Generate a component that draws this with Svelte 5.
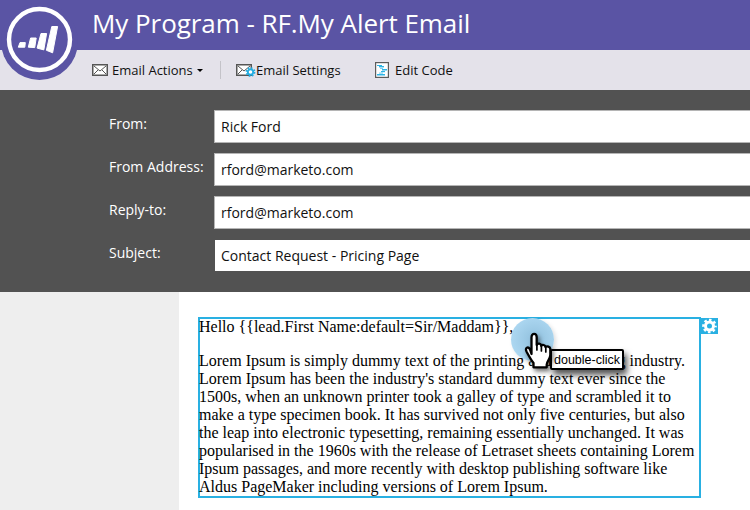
<script>
  const fields = [
    { label: 'From:', value: 'Rick Ford' },
    { label: 'From Address:', value: 'rford@marketo.com' },
    { label: 'Reply-to:', value: 'rford@marketo.com' },
    { label: 'Subject:', value: 'Contact Request - Pricing Page', active: true }
  ];
  const lines = [
    'Lorem Ipsum is simply dummy text of the printing and typesetting industry.',
    "Lorem Ipsum has been the industry's standard dummy text ever since the",
    '1500s, when an unknown printer took a galley of type and scrambled it to',
    'make a type specimen book. It has survived not only five centuries, but also',
    'the leap into electronic typesetting, remaining essentially unchanged. It was',
    'popularised in the 1960s with the release of Letraset sheets containing Lorem',
    'Ipsum passages, and more recently with desktop publishing software like',
    'Aldus PageMaker including versions of Lorem Ipsum.'
  ];
</script>

<div class="app">
  <header>
    <svg class="logo" width="78" height="80" viewBox="0 0 78 80">
      <circle cx="39.5" cy="41.5" r="38.5" fill="#5a54a4" />
      <circle cx="39.5" cy="39.5" r="30.5" fill="none" stroke="#fff" stroke-width="4.4" />
      <g fill="#fff" stroke="#fff" stroke-width="1" stroke-linejoin="round">
        <path d="M20 42.6h5.3l-.5 4.6h-6.5z" />
        <path d="M30.6 38h5.6l-1.5 9.6-6.4-.4z" />
        <path d="M41 33.5h5.6l-2.8 16.4-6.7-1.8z" />
        <path d="M51.8 26.5h5.8l-5 26.3-6.2-2.5z" />
      </g>
    </svg>
    <h1>My Program - RF.My Alert Email</h1>
  </header>

  <nav>
    <div class="item actions">
      <svg width="16" height="12" viewBox="0 0 16 12"><rect x=".75" y=".75" width="14.5" height="10.5" fill="#fff" stroke="#555" stroke-width="1.5" /><path d="M2 2l6 5 6-5M2 10l4-4M14 10l-4-4" fill="none" stroke="#555" /></svg>
      <span>Email Actions</span>
      <i class="caret"></i>
    </div>
    <div class="separator"></div>
    <div class="item settings">
      <svg width="20" height="14" viewBox="0 0 20 14"><rect x=".75" y="1.75" width="14.5" height="10.5" fill="#fff" stroke="#555" stroke-width="1.5" /><path d="M2 3l6 5 6-5M2 11l4-4" fill="none" stroke="#555" /><circle cx="14.5" cy="9" r="4" fill="none" stroke="#22ade2" stroke-width="1.8" stroke-dasharray="1.6 1.54" /><circle cx="14.5" cy="9" r="2.7" fill="#fff" stroke="#22ade2" stroke-width="1.8" /></svg>
      <span>Email Settings</span>
    </div>
    <div class="item code">
      <svg width="14" height="16" viewBox="0 0 14 16"><rect x=".6" y=".6" width="12.8" height="14.8" fill="#fff" stroke="#5c5c5c" stroke-width="1.2" /><g fill="#2eb4e6"><rect x="2" y="3" width="5" height="1" /><rect x="4" y="4" width="5" height="1.4" /><rect x="5" y="6" width="3" height="1" opacity=".6" /><rect x="7" y="7" width="5" height="1.5" /><rect x="6" y="9" width="4" height="1.2" /><rect x="4" y="10.6" width="4" height="1" opacity=".7" /><rect x="2" y="12" width="8" height="1.5" /></g></svg>
      <span>Edit Code</span>
    </div>
  </nav>

  <form>
    {#each fields as field}
      <div class="row">
        <div class="label">{field.label}</div>
        <div class="value" class:active={field.active}>{field.value}</div>
      </div>
    {/each}
  </form>

  <main>
    <aside></aside>
    <section>
      <article>
        <p>Hello {'{{'}lead.First Name:default=Sir/Maddam{'}}'},</p>
        <p>{#each lines as line}<span class="line">{line}</span>{/each}</p>
      </article>
      <svg class="gear" width="17" height="16" viewBox="0 0 17 16">
        <rect width="17" height="16" fill="#29b0e2" />
        <circle cx="8.5" cy="8" r="6" fill="none" stroke="#fff" stroke-width="2.6" stroke-dasharray="2.5 2.212" stroke-dashoffset="1.25" />
        <circle cx="8.5" cy="8" r="4" fill="none" stroke="#fff" stroke-width="3" />
      </svg>
    </section>
  </main>

  <div class="pointer">
    <div class="halo"></div>
    <div class="tip">double-click</div>
    <svg class="hand" width="32" height="40" viewBox="0 0 32 40">
      <path d="M9.5 23V6.3C9.5 1.6 14.7 1.6 14.7 6.3V14c1-2.2 4.3-1.7 4.5.8 1.2-1.6 4-.9 4.3 1.2 1.4-1.3 4.7-.4 4.8 2V24c0 4-3.6 6.3-3.6 9.5v2.8H11.5v-4.3C8.9 28.8 7 25 4.6 20.7 2.4 16.4 6.2 15.3 8 18.3z" fill="#fff" stroke="#000" stroke-width="2.3" stroke-linejoin="round" />
      <path d="M14.9 13v6M19.4 15v5M23.8 16.5V21" fill="none" stroke="#000" stroke-width="1.7" stroke-linecap="round" />
    </svg>
  </div>
</div>

<style>
  :global(body) { margin: 0; overflow: hidden; }
  .app { position: relative; width: 750px; height: 510px; overflow: hidden; background: #fff; font-family: 'Open Sans', sans-serif; color: #111; }
  header { height: 50px; background: #5a54a4; padding-left: 92px; box-sizing: border-box; }
  .logo { position: absolute; left: 0; top: 0; }
  h1 { margin: 0; font-size: 26px; line-height: 46px; letter-spacing: -.06px; font-weight: 400; color: #fff; white-space: nowrap; }
  nav { height: 40px; display: flex; align-items: center; background: #e4e2ea; padding-left: 92px; font-size: 13px; }
  .item { display: flex; align-items: center; white-space: nowrap; }
  .actions { width: 128px; }
  .actions span { margin-left: 4px; }
  .caret { margin-left: 4px; border: 3px solid transparent; border-top-color: #000; border-bottom: 0; }
  .separator { width: 1px; height: 18px; background: #c4c3c9; }
  .settings { margin-left: 15px; width: 139px; }
  .code span { margin-left: 6px; }
  form { height: 202px; box-sizing: border-box; padding: 20px 0 0 109px; display: flex; flex-direction: column; gap: 10px; background: #525252; font-size: 14px; }
  .row { display: flex; height: 33px; }
  .label { width: 105px; flex: none; color: #fff; line-height: 28px; white-space: nowrap; }
  .value { flex: 1; box-sizing: border-box; border: 1px solid #b5b5b5; border-right: 0; padding-left: 6px; background: #fff; line-height: 31px; height: 33px; }
  .active { border-color: #525252; background-clip: padding-box; }
  main { display: flex; height: 218px; }
  aside { width: 179px; background: #eee; }
  section { flex: 1; display: flex; align-items: flex-start; padding: 25px 0 0 19px; }
  article { width: 503px; height: 181px; box-sizing: border-box; border: 2px solid #29b0e2; font: 16px/18px 'Liberation Serif', serif; color: #000; white-space: nowrap; }
  p { margin: -1px 0 17px -1px; }
  .line { display: block; }
  .gear { margin-top: 1px; }
  .pointer { position: absolute; left: 511px; top: 317px; width: 120px; height: 65px; }
  .halo { position: absolute; left: 0; top: 1px; width: 43px; height: 43px; border-radius: 50%; background: radial-gradient(circle at 55% 50%, #9ac8e4 25%, #abd6f0 70%, #b9e1f8); box-shadow: 2px 2px 4px #0002; }
  .tip { position: absolute; left: 39px; top: 32px; width: 74px; height: 21px; box-sizing: border-box; border: 2px solid #000; border-radius: 2px; background: #fff; font: 12.5px/18px 'Liberation Sans', sans-serif; padding-left: 2px; color: #000; box-shadow: 3px 5px 6px #000a; white-space: nowrap; }
  .hand { position: absolute; left: 11px; top: 14px; filter: drop-shadow(2px 3px 2px #0008); }
</style>
